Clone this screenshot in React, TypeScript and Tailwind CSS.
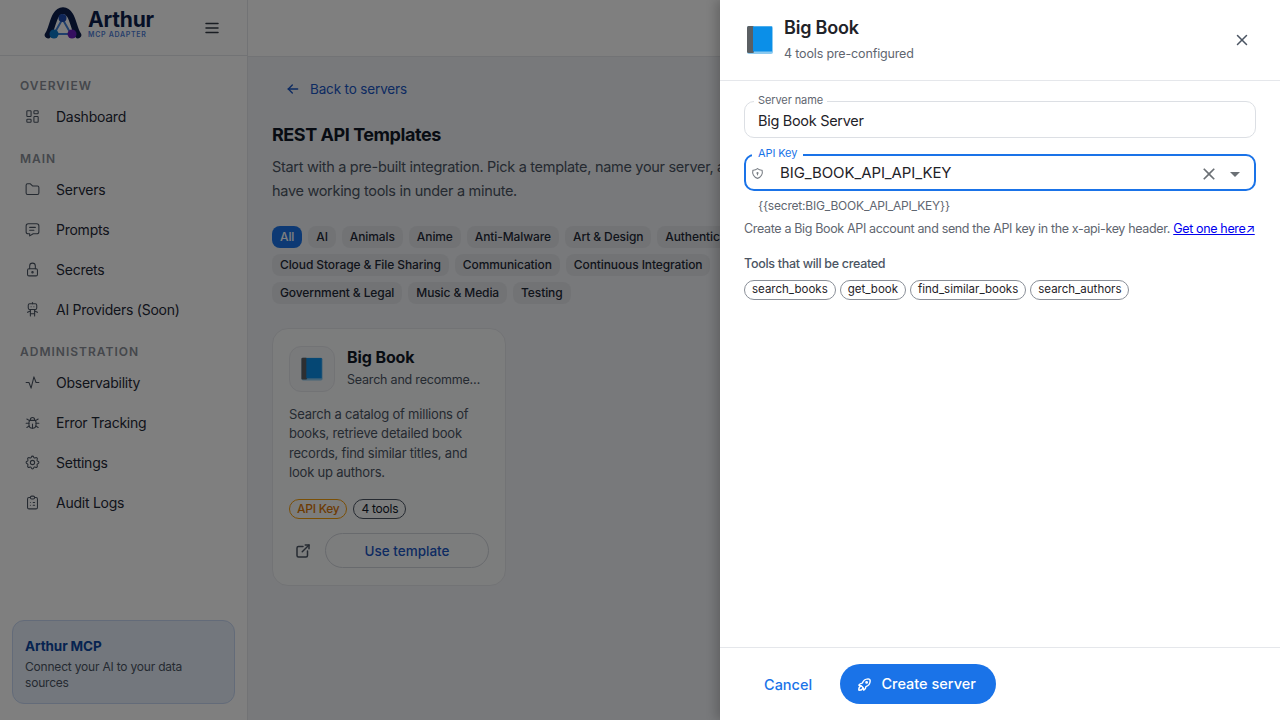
import {
  TbActivity,
  TbArrowLeft,
  TbBug,
  TbClipboardList,
  TbExternalLink,
  TbFolder,
  TbLayoutDashboard,
  TbLock,
  TbMenu2,
  TbMessage,
  TbRobot,
  TbRocket,
  TbSettings,
  TbShieldLock,
  TbX,
} from 'react-icons/tb'
import { MdArrowDropDown, MdClose } from 'react-icons/md'

const font = "font-['Inter',sans-serif]"

const sections = [
  { title: 'OVERVIEW', top: 'mt-[22px]', items: [{ icon: TbLayoutDashboard, label: 'Dashboard' }] },
  {
    title: 'MAIN',
    top: 'mt-[15px]',
    items: [
      { icon: TbFolder, label: 'Servers' },
      { icon: TbMessage, label: 'Prompts' },
      { icon: TbLock, label: 'Secrets' },
      { icon: TbRobot, label: 'AI Providers (Soon)' },
    ],
  },
  {
    title: 'ADMINISTRATION',
    top: 'mt-[15px]',
    items: [
      { icon: TbActivity, label: 'Observability' },
      { icon: TbBug, label: 'Error Tracking' },
      { icon: TbSettings, label: 'Settings' },
      { icon: TbClipboardList, label: 'Audit Logs' },
    ],
  },
]

const categoryRows = [
  ['All', 'AI', 'Animals', 'Anime', 'Anti-Malware', 'Art & Design', 'Authentication'],
  ['Cloud Storage & File Sharing', 'Communication', 'Continuous Integration'],
  ['Government & Legal', 'Music & Media', 'Testing'],
]

const tools = ['search_books', 'get_book', 'find_similar_books', 'search_authors']

function BookIcon({ size }: { size: number }) {
  return (
    <svg width={size} height={size} viewBox="0 0 32 32">
      <rect x="3" y="2" width="26" height="28" rx="2" fill="#8ccaf0" />
      <rect x="3" y="2" width="7" height="27" rx="1.5" fill="#5b5f63" />
      <rect x="9" y="2.5" width="19" height="25" fill="#0b8fe8" />
    </svg>
  )
}

function Logo() {
  return (
    <div className="-mt-[8px] flex items-center gap-[6px]">
      <svg width="38" height="33" viewBox="0 0 38 33">
        <path d="M4 28 C9 21 9 4 19 3.5 C29 4 29 21 34 28" fill="none" stroke="#0d1f4c" strokeWidth="6.5" strokeLinecap="round" />
        <path d="M18.5 12 L10 27 L27 27 Z" fill="none" stroke="#3f7fd8" strokeWidth="2" />
        <circle cx="18.5" cy="11" r="4" fill="#1c4bb0" />
        <circle cx="10" cy="27" r="4.5" fill="#0b78c8" />
        <circle cx="28" cy="27" r="4.5" fill="#6a1fc0" />
      </svg>
      <div className="flex flex-col pt-[1px]">
        <span className="text-[21px] leading-[20px] font-bold tracking-[-0.2px] text-[#0d1f4c]">Arthur</span>
        <span className="text-[7px] leading-[9px] font-semibold tracking-[0.7px] text-[#4f7fd8]">MCP ADAPTER</span>
      </div>
    </div>
  )
}

function Sidebar() {
  return (
    <aside className="flex h-full w-[248px] shrink-0 flex-col border-r border-[#e5e7eb] bg-white">
      <div className="flex h-[56px] shrink-0 items-center border-b border-[#e5e7eb] pl-[44px] pr-[26px]">
        <Logo />
        <TbMenu2 className="ml-auto text-[#333a44]" size={18} />
      </div>
      <nav className="flex flex-1 flex-col">
        {sections.map((s) => (
          <div key={s.title} className={s.top}>
            <div className="pl-5 text-[12px] leading-4 font-semibold tracking-[1px] text-[#8a8f98]">{s.title}</div>
            <div className="mt-[2px] flex flex-col">
              {s.items.map((item) => (
                <div key={item.label} className="flex h-10 items-center gap-[15px] pl-[24px]">
                  <item.icon size={17} className="shrink-0 text-[#4b5563]" strokeWidth={1.5} />
                  <span className="text-[14px] tracking-[-0.25px] whitespace-nowrap text-[#1f2937]">{item.label}</span>
                </div>
              ))}
            </div>
          </div>
        ))}
      </nav>
      <div className="mx-3 mb-4 flex h-[84px] flex-col rounded-xl border border-[#c7d7f2] bg-[#e6eefb] px-3 pt-[15px]">
        <div className="text-[13.5px] leading-5 font-bold tracking-[-0.1px] text-[#0d47a1]">Arthur MCP</div>
        <div className="mt-[3px] text-[12px] leading-4 tracking-[-0.2px] text-[#4b5563]">Connect your AI to your data sources</div>
      </div>
    </aside>
  )
}

function TemplateCard() {
  return (
    <div className="mt-6 flex h-[258px] w-[234px] flex-col rounded-2xl border border-[#e5e7eb] bg-[#f9fafb] px-4 pt-[17px]">
      <div className="flex items-center gap-3">
        <div className="flex size-[46px] shrink-0 items-center justify-center rounded-xl border border-[#e5e7eb] bg-[#f3f4f6]">
          <BookIcon size={26} />
        </div>
        <div className="min-w-0 pr-[6px] pb-[2px]">
          <div className="-mt-[1px] text-[16px] leading-6 font-bold tracking-[-0.1px] text-[#111827]">Big Book</div>
          <div className="mt-[1px] truncate text-[12.5px] leading-5 tracking-[-0.2px] text-[#4b5563]">Search and recommend books</div>
        </div>
      </div>
      <p className="mt-[13px] text-[13px] leading-[19.3px] tracking-[-0.2px] text-[#4b5563]">
        Search a catalog of millions of books, retrieve detailed book records, find similar titles, and look up authors.
      </p>
      <div className="mt-[17px] flex gap-[6px]">
        <span className="flex h-5 items-center rounded-full border border-[#f59e0b] px-[7px] text-[12px] font-medium tracking-[-0.25px] text-[#d97706]">
          API Key
        </span>
        <span className="flex h-5 items-center rounded-full border border-[#4b5563] px-[7px] text-[12px] tracking-[-0.25px] text-[#111827]">
          4 tools
        </span>
      </div>
      <div className="mt-[14px] flex items-center gap-[13px]">
        <TbExternalLink size={18} className="ml-[5px] shrink-0 text-[#4b5563]" />
        <div className="flex h-[35px] flex-1 items-center justify-center rounded-full border border-[#d1d5db] text-[13.5px] font-medium text-[#1a56c4]">
          Use template
        </div>
      </div>
    </div>
  )
}

function Main() {
  return (
    <main className="flex h-full flex-1 flex-col overflow-hidden bg-[#f0f2f6]">
      <div className="h-[57px] shrink-0 border-b border-[#e5e7eb] bg-white" />
      <div className="px-6">
        <div className="mt-[23px] flex h-[18px] items-center gap-[9px] pl-[13px] text-[13.5px] font-normal tracking-[-0.15px] text-[#1a56c4]">
          <TbArrowLeft size={16} />
          <span>Back to servers</span>
        </div>
        <h1 className="mt-[23px] text-[18px] leading-7 font-bold tracking-[-0.45px] text-[#111827]">REST API Templates</h1>
        <p className="mt-[6px] w-[490px] text-[14.5px] leading-6 tracking-[-0.3px] text-[#4b5563]">
          Start with a pre-built integration. Pick a template, name your server, and have working tools in under a minute.
        </p>
        <div className="mt-[23px] flex flex-col gap-[6px]">
          {categoryRows.map((row, i) => (
            <div key={i} className="flex gap-[6px]">
              {row.map((c) => (
                <span
                  key={c}
                  className={
                    c === 'All'
                      ? 'flex h-[22px] items-center rounded-lg bg-[#1a73e8] px-2 text-[12px] font-medium tracking-[-0.1px] text-white'
                      : 'flex h-[22px] items-center rounded-lg bg-[#e5e7eb] px-2 text-[12px] font-medium tracking-[-0.1px] whitespace-nowrap text-[#1f2937]'
                  }
                >
                  {c}
                </span>
              ))}
            </div>
          ))}
        </div>
        <TemplateCard />
      </div>
    </main>
  )
}

function Drawer() {
  return (
    <div className="absolute inset-y-0 right-0 flex w-[560px] flex-col bg-white shadow-[-4px_0_10px_rgba(0,0,0,0.2)]">
      <header className="flex h-[81px] shrink-0 items-center border-b border-[#e5e7eb] pl-[24px] pr-[29px]">
        <BookIcon size={32} />
        <div className="ml-[8px] -mt-[3px]">
          <div className="text-[18px] leading-7 font-semibold tracking-[-0.2px] text-[#1f2329]">Big Book</div>
          <div className="mt-[2px] text-[12.5px] leading-5 tracking-[-0.15px] text-[#5f6670]">4 tools pre-configured</div>
        </div>
        <TbX size={18} className="ml-auto text-[#4b5563]" />
      </header>

      <div className="flex flex-1 flex-col px-6 pt-5">
        <div className="relative flex h-[37px] items-center rounded-[10px] border border-[#dcdfe4] pl-[13px] pt-[2px] text-[14.5px] tracking-[-0.3px] text-[#1f2329]">
          <span className="absolute -top-[9px] left-[9px] bg-white px-1 text-[11px] leading-[14px] tracking-[-0.1px] text-[#5f6670]">Server name</span>
          Big Book Server
        </div>

        <div className="relative mt-4 flex h-[37px] items-center rounded-[10px] border-2 border-[#1a73e8] pl-[5px] pr-[8px] pt-[2px] text-[15px] tracking-[-0.1px] text-[#1f2329]">
          <span className="absolute -top-[10px] left-[6px] bg-white px-1.5 text-[11px] leading-[14px] text-[#1a73e8]">API Key</span>
          <TbShieldLock size={13} className="text-[#7b8087]" />
          <span className="ml-[16px]">BIG_BOOK_API_API_KEY</span>
          <MdClose size={20} className="ml-auto text-[#6b7075]" />
          <MdArrowDropDown size={24} className="ml-[4px] -mr-[1px] text-[#6b7075]" />
        </div>

        <div className="mt-[7px] pl-[14px] text-[12px] leading-4 tracking-[-0.2px] text-[#5f6670]">{'{{secret:BIG_BOOK_API_API_KEY}}'}</div>
        <div className="mt-[7px] text-[12.5px] leading-4 tracking-[-0.35px] whitespace-nowrap text-[#5f6670]">
          Create a Big Book API account and send the API key in the x-api-key header.{' '}
          <span className="text-[#0000ee] underline">Get one here↗</span>
        </div>

        <div className="mt-[19px] text-[12.5px] leading-4 font-medium tracking-[-0.3px] text-[#4b5563]">Tools that will be created</div>
        <div className="mt-[8px] flex gap-1">
          {tools.map((t) => (
            <span key={t} className="flex h-5 items-center rounded-full border border-[#8a8f98] px-[7px] text-[11.5px] text-[#1f2329]">
              {t}
            </span>
          ))}
        </div>
      </div>

      <footer className="flex h-[73px] shrink-0 items-center border-t border-[#e5e7eb] pl-[44px]">
        <span className="pt-px text-[14.5px] font-medium text-[#1a73e8]">Cancel</span>
        <div className="ml-[28px] flex h-10 w-[156px] items-center justify-center gap-2 rounded-full bg-[#1a73e8] pr-[4px] text-[14.5px] font-medium text-white">
          <TbRocket size={17} />
          Create server
        </div>
      </footer>
    </div>
  )
}

export default function App() {
  return (
    <div className={`relative flex h-screen w-screen overflow-hidden ${font}`}>
      <Sidebar />
      <Main />
      <div className="absolute inset-0 bg-black/50" />
      <Drawer />
    </div>
  )
}
